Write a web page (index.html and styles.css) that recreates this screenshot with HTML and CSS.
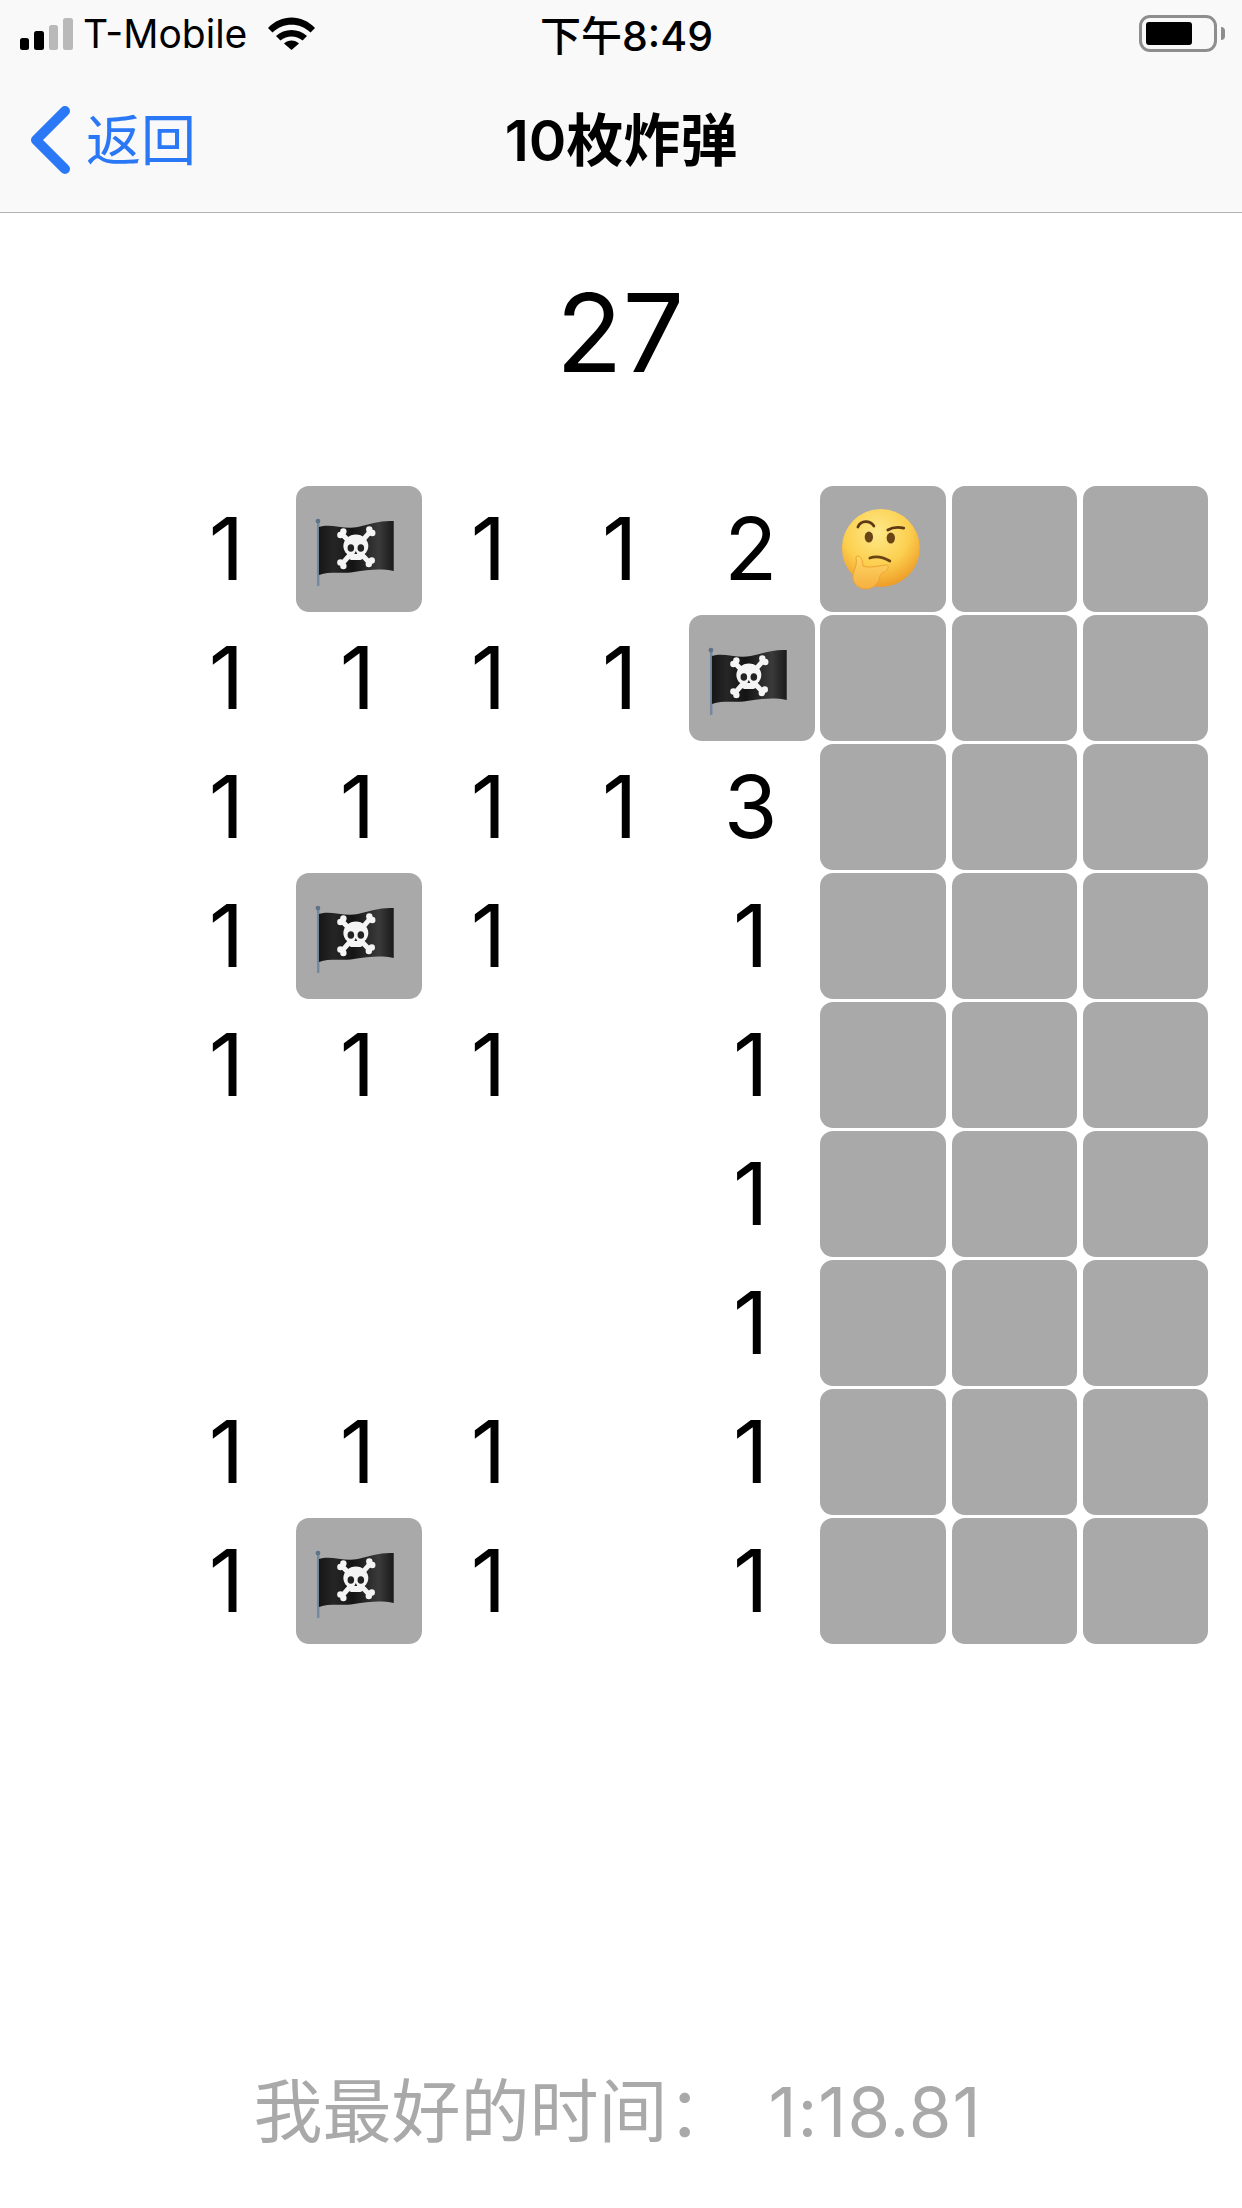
FILE: index.html
```html
<!DOCTYPE html>
<html lang="zh">
<head>
  <meta charset="utf-8">
  <title>10枚炸弹</title>
  <link rel="stylesheet" href="styles.css">
</head>
<body>

<svg class="defs" width="0" height="0">
  <defs>
    <linearGradient id="flagShade" x1="0" x2="1" y1="0" y2="0">
      <stop offset="0" stop-color="#161616"/>
      <stop offset="0.2" stop-color="#262626"/>
      <stop offset="0.45" stop-color="#141414"/>
      <stop offset="0.8" stop-color="#3a3a3a"/>
      <stop offset="1" stop-color="#1a1a1a"/>
    </linearGradient>
    <radialGradient id="faceShade" cx="0.45" cy="0.3" r="0.75">
      <stop offset="0" stop-color="#fee98a"/>
      <stop offset="0.55" stop-color="#fcd050"/>
      <stop offset="1" stop-color="#ec9420"/>
    </radialGradient>
    <linearGradient id="handShade" x1="0" x2="0" y1="0" y2="1">
      <stop offset="0" stop-color="#fed765"/>
      <stop offset="1" stop-color="#f6b040"/>
    </linearGradient>
    <symbol id="pirate" viewBox="0 0 126 126">
      <rect x="21" y="35" width="2.500" height="65" fill="#7488a0"/>
      <circle cx="22" cy="35" r="2.400" fill="#5f7288"/>
      <path d="M23 41 C35 37 48 44 62 41 C74 38 86 34 98 35 L98 85 C84 82 72 84 58 86 C45 88 35 85 23 89 Z" fill="url(#flagShade)"/>
      <g stroke="#f4f4f4" stroke-width="5" stroke-linecap="round">
        <line x1="47" y1="49" x2="74" y2="77"/>
        <line x1="74" y1="46" x2="47" y2="77"/>
      </g>
      <g fill="#f4f4f4">
        <circle cx="44.500" cy="49" r="3.200"/><circle cx="47.500" cy="45.500" r="3.200"/>
        <circle cx="76.500" cy="47" r="3.200"/><circle cx="73.500" cy="43.500" r="3.200"/>
        <circle cx="44.500" cy="76.500" r="3.200"/><circle cx="47.500" cy="80" r="3.200"/>
        <circle cx="76" cy="74.500" r="3.200"/><circle cx="73" cy="78" r="3.200"/>
        <ellipse cx="60" cy="60" rx="12.500" ry="11.500"/>
        <rect x="53" y="64" width="14" height="10" rx="2.500"/>
      </g>
      <ellipse cx="55" cy="62" rx="3.300" ry="3.800" fill="#222"/>
      <ellipse cx="65" cy="62" rx="3.300" ry="3.800" fill="#222"/>
      <path d="M60 65 l-1.500 3 h3 Z" fill="#222"/>
    </symbol>
  </defs>
</svg>

<header class="top">
  <div class="status">
    <div class="status-left">
      <svg class="signal" width="53" height="32" viewBox="0 0 53 32">
        <rect x="0" y="20" width="9" height="12" rx="2.500" fill="#000"/>
        <rect x="14" y="13" width="10" height="19" rx="2.500" fill="#000"/>
        <rect x="29" y="7" width="9" height="25" rx="2.500" fill="#b9b9b9"/>
        <rect x="43" y="0" width="10" height="32" rx="2.500" fill="#b9b9b9"/>
      </svg>
      <span class="carrier">T-Mobile</span>
      <svg class="wifi" width="47" height="33" viewBox="0 0 47 33">
        <path d="M0 11 C13 -3 34 -3 47 11 L42.500 15.500 C32 5 15 5 4.500 15.500 Z" fill="#000"/>
        <path d="M8 19 C16 11 31 11 39 19 L34.500 23.500 C28 18 19 18 12.500 23.500 Z" fill="#000"/>
        <path d="M16 26.500 C20 22.500 27 22.500 31 26.500 L23.500 33 Z" fill="#000"/>
      </svg>
    </div>
    <div class="clock">下午8:49</div>
    <div class="status-right">
      <div class="battery"><div class="battery-fill"></div></div>
      <div class="battery-nub"></div>
    </div>
  </div>
  <nav class="navbar">
    <div class="back">
      <svg class="chevron" width="42" height="70" viewBox="0 0 42 70">
        <path d="M36 6 L7 35 L36 64" fill="none" stroke="#2a78f6" stroke-width="10" stroke-linecap="round" stroke-linejoin="round"/>
      </svg>
      <span class="back-label">返回</span>
    </div>
    <h1 class="title">10枚炸弹</h1>
    <div class="nav-spacer"></div>
  </nav>
</header>

<main class="game">
  <div class="elapsed">27</div>

  <div class="board">
    <div class="cell"></div><div class="cell">1</div><div class="cell tile"><svg class="emoji"><use href="#pirate"/></svg></div><div class="cell">1</div><div class="cell">1</div><div class="cell">2</div>
    <div class="cell tile">
      <svg class="emoji" viewBox="0 0 126 126">
        <circle cx="61" cy="62" r="39" fill="url(#faceShade)"/>
        <path d="M38 41 C41 34 50 34 54 40" fill="none" stroke="#5e3a12" stroke-width="2.800" stroke-linecap="round"/>
        <path d="M68 44 C73 41 79 41 84 42" fill="none" stroke="#5e3a12" stroke-width="2.800" stroke-linecap="round"/>
        <ellipse cx="49" cy="51" rx="4.200" ry="5.500" fill="#6b4416"/>
        <ellipse cx="71" cy="52" rx="4.200" ry="5.500" fill="#6b4416"/>
        <path d="M50 72 C56 70 63 71 70 75" fill="none" stroke="#6b4416" stroke-width="2.800" stroke-linecap="round"/>
        <path d="M36 71 C39 68 43 72 43 80 C50 83 60 79 67 79 C70 80 68 85 63 87 C61 88 60 89 60 91 C59 97 54 103 46 103 C38 103 33 97 33 91 C33 85 38 80 36 71 Z" fill="url(#handShade)" stroke="#eda233" stroke-width="1"/>
      </svg>
    </div>
    <div class="cell tile"></div><div class="cell tile"></div>

    <div class="cell"></div><div class="cell">1</div><div class="cell">1</div><div class="cell">1</div><div class="cell">1</div>
    <div class="cell tile"><svg class="emoji"><use href="#pirate"/></svg></div>
    <div class="cell tile"></div><div class="cell tile"></div><div class="cell tile"></div>

    <div class="cell"></div><div class="cell">1</div><div class="cell">1</div><div class="cell">1</div><div class="cell">1</div><div class="cell">3</div>
    <div class="cell tile"></div><div class="cell tile"></div><div class="cell tile"></div>

    <div class="cell"></div><div class="cell">1</div><div class="cell tile"><svg class="emoji"><use href="#pirate"/></svg></div><div class="cell">1</div><div class="cell"></div><div class="cell">1</div>
    <div class="cell tile"></div><div class="cell tile"></div><div class="cell tile"></div>

    <div class="cell"></div><div class="cell">1</div><div class="cell">1</div><div class="cell">1</div><div class="cell"></div><div class="cell">1</div>
    <div class="cell tile"></div><div class="cell tile"></div><div class="cell tile"></div>

    <div class="cell"></div><div class="cell"></div><div class="cell"></div><div class="cell"></div><div class="cell"></div><div class="cell">1</div>
    <div class="cell tile"></div><div class="cell tile"></div><div class="cell tile"></div>

    <div class="cell"></div><div class="cell"></div><div class="cell"></div><div class="cell"></div><div class="cell"></div><div class="cell">1</div>
    <div class="cell tile"></div><div class="cell tile"></div><div class="cell tile"></div>

    <div class="cell"></div><div class="cell">1</div><div class="cell">1</div><div class="cell">1</div><div class="cell"></div><div class="cell">1</div>
    <div class="cell tile"></div><div class="cell tile"></div><div class="cell tile"></div>

    <div class="cell"></div><div class="cell">1</div><div class="cell tile"><svg class="emoji"><use href="#pirate"/></svg></div><div class="cell">1</div><div class="cell"></div><div class="cell">1</div>
    <div class="cell tile"></div><div class="cell tile"></div><div class="cell tile"></div>
  </div>

  <div class="best">我最好的时间：<span class="best-time">1:18.81</span></div>
</main>

</body>
</html>
```

FILE: styles.css
```css
html, body {
  margin: 0;
  padding: 0;
  background: #fff;
}
body {
  width: 1242px;
  height: 2208px;
  overflow: hidden;
  font-family: Inter, "Noto Sans CJK SC", sans-serif;
  color: #000;
}
.defs {
  display: block;
  height: 0;
}

.top {
  height: 212px;
  background: #f9f9f9;
  border-bottom: 1px solid #b2b2b2;
}
.status {
  height: 67px;
  padding: 0 17px 0 20px;
  display: grid;
  grid-template-columns: 1fr auto 1fr;
  align-items: center;
}
.status-left {
  display: flex;
  align-items: center;
}
.signal {
  margin-right: 10px;
}
.carrier {
  font-size: 39px;
  margin-right: 21px;
}
.clock {
  font-size: 41px;
  font-weight: 500;
  margin-left: 8px;
  padding-bottom: 2px;
}
.status-right {
  display: flex;
  align-items: center;
  justify-content: flex-end;
}
.battery {
  width: 78px;
  height: 37px;
  box-sizing: border-box;
  border: 3px solid #8e8e8e;
  border-radius: 11px;
  padding: 4px;
}
.battery-fill {
  width: 46px;
  height: 100%;
  background: #000;
  border-radius: 3px;
}
.battery-nub {
  width: 4px;
  height: 13px;
  margin-left: 4px;
  background: #8e8e8e;
  border-radius: 0 4px 4px 0;
}

.navbar {
  height: 145px;
  display: grid;
  grid-template-columns: 1fr auto 1fr;
  align-items: center;
}
.back {
  display: flex;
  align-items: center;
  padding-left: 29px;
  color: #2a78f6;
}
.chevron {
  margin-right: 15px;
}
.back-label {
  font-size: 55px;
  padding-bottom: 7px;
}
.title {
  margin: 0;
  font-size: 57px;
  font-weight: 600;
  padding-bottom: 8px;
}

.game {
  position: relative;
  height: 1995px;
}
.elapsed {
  padding: 49px 2px 0 0;
  height: 210px;
  box-sizing: border-box;
  text-align: center;
  font-size: 109px;
  line-height: 140px;
}
.board {
  margin: 63px 0 0 34px;
  display: grid;
  grid-template-columns: repeat(9, 125.670px);
  grid-auto-rows: 125.670px;
  column-gap: 5.430px;
  row-gap: 3.330px;
}
.cell {
  display: flex;
  align-items: center;
  justify-content: center;
  padding-right: 3px;
  font-size: 87px;
  line-height: 1;
}
.tile {
  padding-right: 0;
  background: #a9a9a9;
  border-radius: 13px;
}
.emoji {
  width: 126px;
  height: 126px;
  display: block;
}
.best {
  margin-top: 428px;
  padding-right: 7px;
  text-align: center;
  font-size: 69px;
  line-height: 80px;
  color: #a9a9a9;
}
.best-time {
  margin-left: 32px;
  letter-spacing: 1px;
}
```
